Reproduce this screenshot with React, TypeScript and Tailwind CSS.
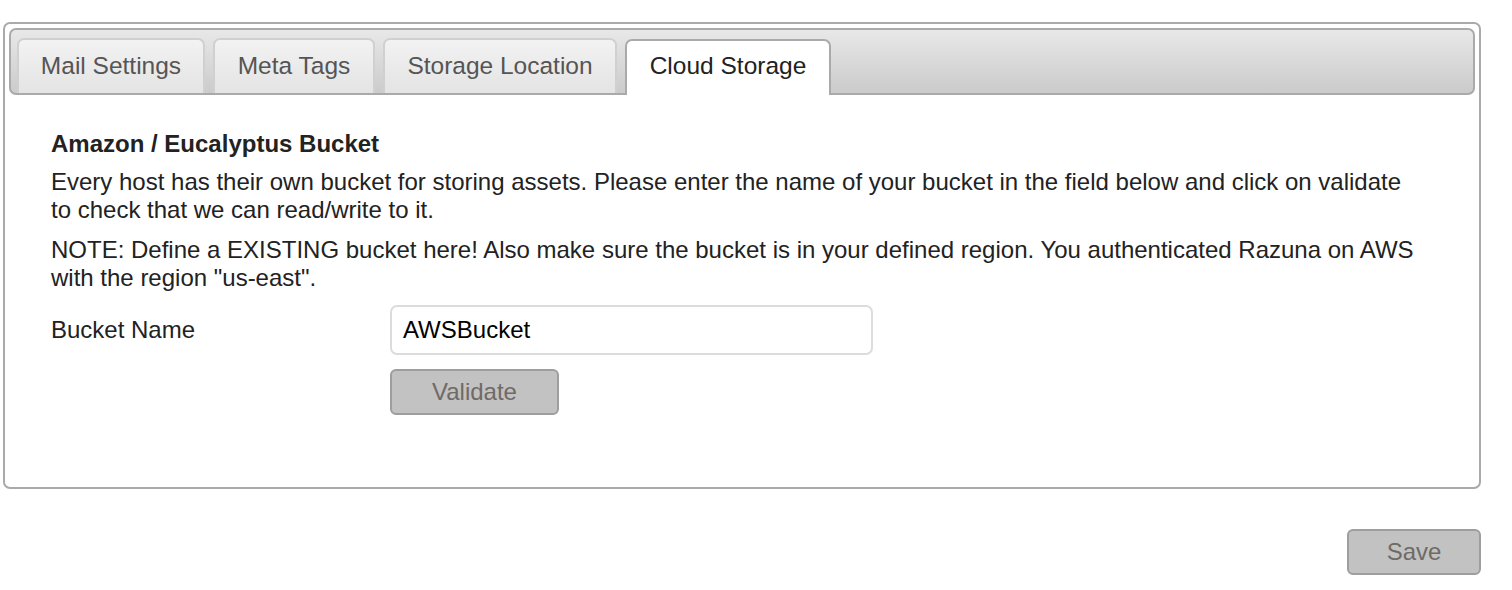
import React from "react";

const tabs = ["Mail Settings", "Meta Tags", "Storage Location", "Cloud Storage"];
const widths = ["w-[188px]", "w-[162px]", "w-[234px]", "w-[206px]"];

export default function App() {
  const active = 3;
  return (
    <div className="w-[1512px] h-[590px] bg-white font-['Liberation_Sans',Arial,sans-serif] text-[#222]">
      <div className="pt-[22px] pl-[3px] pr-[31px]">
        <div className="border-2 border-[#aaa] rounded-[7px] p-[4px] pb-[72px]">
          <div className="h-[67px] border-2 border-[#aaa] rounded-[7px] bg-gradient-to-b from-[#e8e8e8] to-[#cbcbcb] flex items-end gap-[8px] pl-[6px]">
            {tabs.map((t, i) => (
              <div
                key={t}
                className={
                  i === active
                    ? `${widths[i]} h-[56px] -mb-[2px] pb-[3px] bg-white border-2 border-b-0 border-[#aaa] rounded-t-[7px] flex items-center justify-center text-[24.5px] text-[#222]`
                    : `${widths[i]} h-[55px] bg-gradient-to-b from-[#f2f2f2] to-[#e4e4e4] border-2 border-b-0 border-[#d0d0d0] rounded-t-[7px] flex items-center justify-center text-[24.5px] text-[#555]`
                }
              >
                {t}
              </div>
            ))}
          </div>
          <div className="pt-[35px] pl-[42px] pr-[58px] text-[24px] leading-[28px]">
            <div className="font-bold mb-[10px] text-[24px]">Amazon / Eucalyptus Bucket</div>
            <p className="mb-[12px]">
              Every host has their own bucket for storing assets. Please enter the name of your bucket in the field below and click on validate to check that we can read/write to it.
            </p>
            <p>
              NOTE: Define a EXISTING bucket here! Also make sure the bucket is in your defined region. You authenticated Razuna on AWS with the region "us-east".
            </p>
            <div className="flex items-center mt-[13px]">
              <div className="w-[339px]">Bucket Name</div>
              <div className="w-[483px] h-[50px] border-2 border-[#dcdcdc] rounded-[7px] flex items-center pl-[11px] text-[24px] text-black">
                AWSBucket
              </div>
            </div>
            <div className="pl-[339px] mt-[14px]">
              <div className="w-[169px] h-[46px] bg-[#c2c2c2] border-2 border-[#9e9e9e] rounded-[6px] flex items-center justify-center text-[24px] text-[#6f6a66]">
                Validate
              </div>
            </div>
          </div>
        </div>
        <div className="flex justify-end mt-[40px]">
          <div className="w-[134px] h-[46px] bg-[#c2c2c2] border-2 border-[#9e9e9e] rounded-[6px] flex items-center justify-center text-[24px] text-[#6f6a66]">
            Save
          </div>
        </div>
      </div>
    </div>
  );
}
